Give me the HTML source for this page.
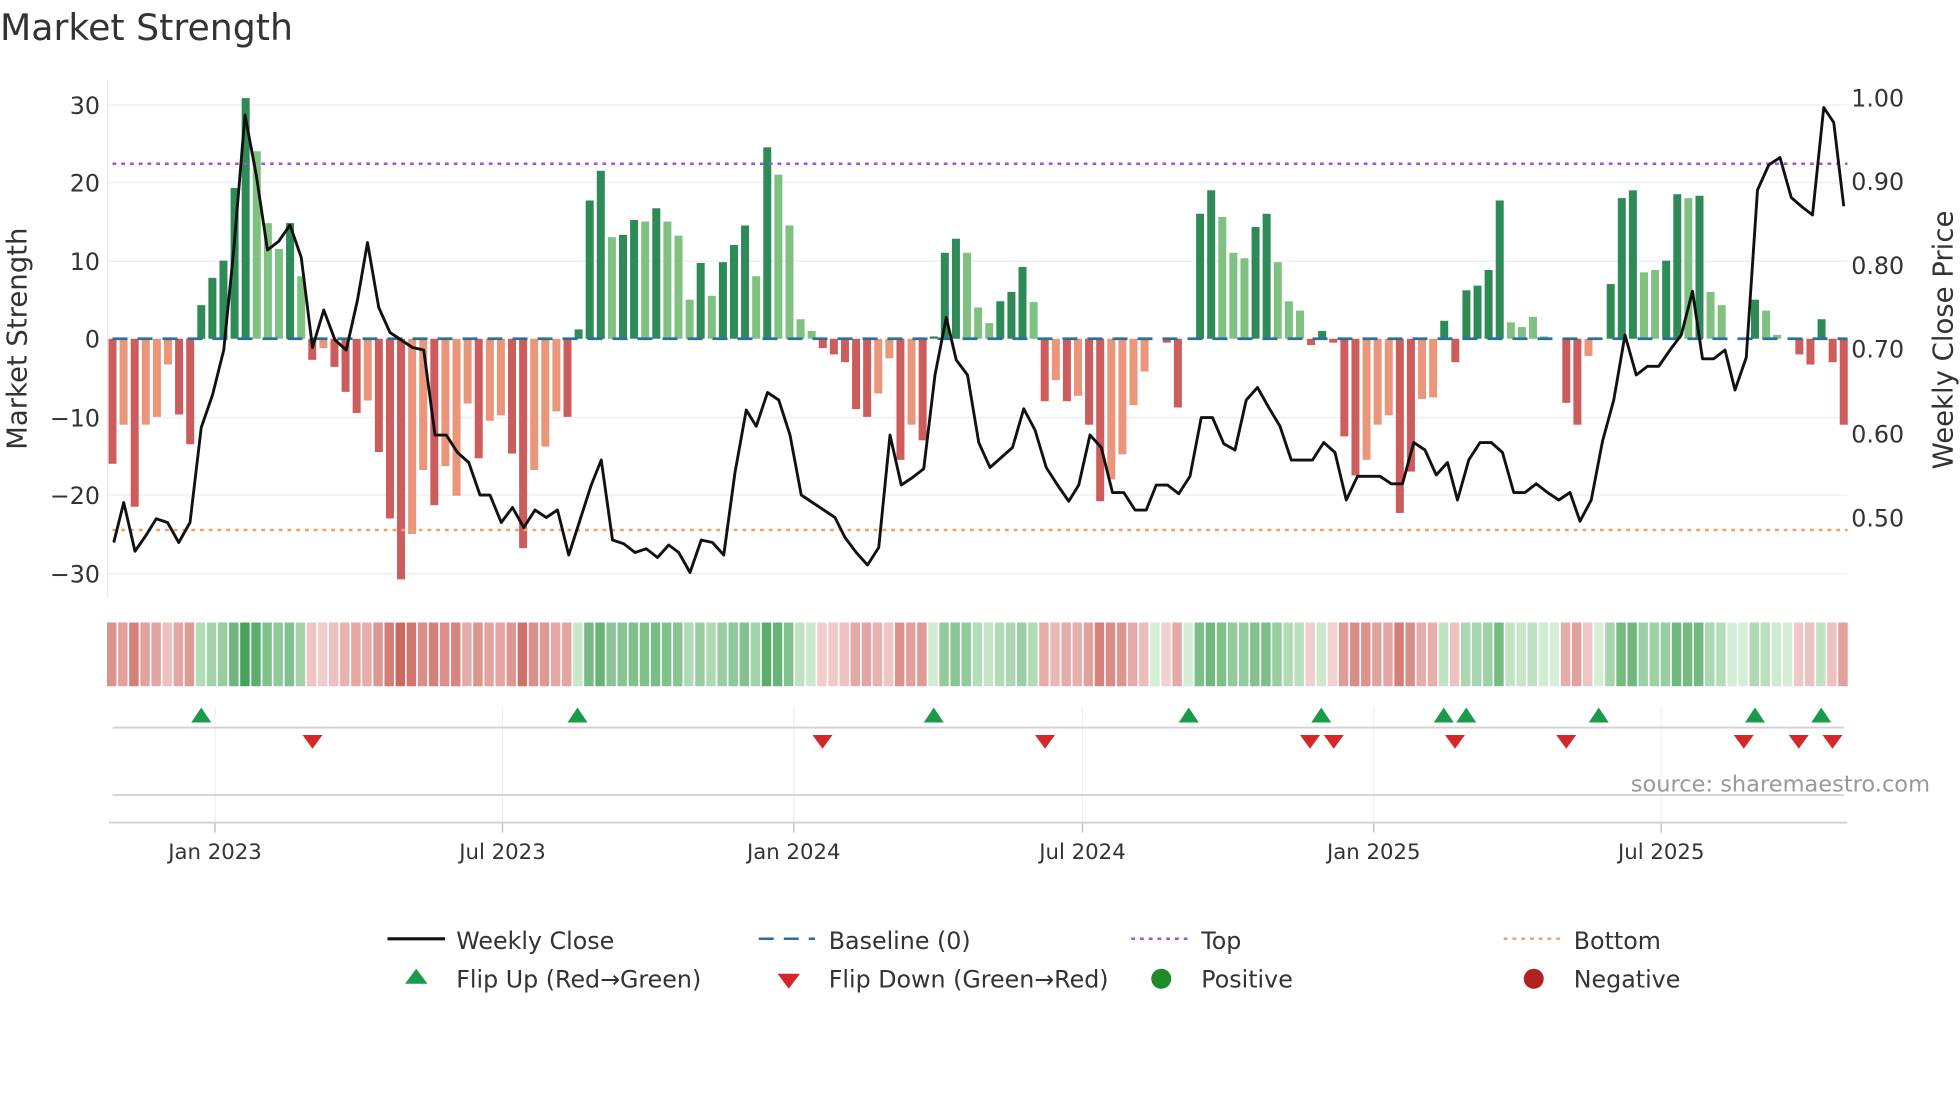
<!DOCTYPE html>
<html><head><meta charset="utf-8"><style>
html,body{margin:0;padding:0;background:#fff;width:1960px;height:1102px;overflow:hidden}
svg{display:block}
text{font-family:"DejaVu Sans","Liberation Sans",sans-serif;fill:#333}
</style></head><body>
<svg id="s" width="1960" height="1102" viewBox="0 0 1568 881.6" xmlns="http://www.w3.org/2000/svg">
<rect width="1568" height="882" fill="#fff"/>
<text x="0" y="32" font-size="29" fill="#333">Market Strength</text>
<g id="grid" stroke="#eef0f3" stroke-width="1.2"></g>
<line x1="86" y1="65" x2="86" y2="478" stroke="#e6e8ea" stroke-width="1"/>
<g id="bars"></g>
<line x1="90" y1="131" x2="1478" y2="131" stroke="#9b59d9" stroke-width="2" stroke-dasharray="3,4"/>
<line x1="90" y1="424" x2="1478" y2="424" stroke="#f0a060" stroke-width="2" stroke-dasharray="3,4"/>
<line x1="90" y1="271" x2="1478" y2="271" stroke="#2a6f9e" stroke-width="2.2" stroke-dasharray="12,8"/>
<polyline id="pl" fill="none" stroke="#111" stroke-width="2.3" stroke-linejoin="round"/>
<g font-size="19" text-anchor="end">
<text x="80" y="91">30</text><text x="80" y="153">20</text><text x="80" y="216">10</text><text x="80" y="278">0</text>
<text x="80" y="341">−10</text><text x="80" y="403">−20</text><text x="80" y="466">−30</text>
</g>
<g font-size="19">
<text x="1481" y="85">1.00</text><text x="1481" y="152">0.90</text><text x="1481" y="219">0.80</text><text x="1481" y="286">0.70</text>
<text x="1481" y="354">0.60</text><text x="1481" y="421">0.50</text>
</g>
<text transform="translate(21,271) rotate(-90)" font-size="22" text-anchor="middle">Market Strength</text>
<text transform="translate(1562,272) rotate(-90)" font-size="22" text-anchor="middle">Weekly Close Price</text>
<g id="heat"></g>
<g id="vgrid" stroke="#eef0f3" stroke-width="1"></g>
<line x1="90" y1="582" x2="1475" y2="582" stroke="#d0d2d4" stroke-width="1.5"/>
<line x1="90" y1="636" x2="1475" y2="636" stroke="#d0d2d4" stroke-width="1.5"/>
<line x1="87" y1="658" x2="1478" y2="658" stroke="#d0d2d4" stroke-width="1.5"/>
<g id="flips"></g>
<text x="1544" y="633" font-size="18" fill="#999" text-anchor="end" style="fill:#999">source: sharemaestro.com</text>
<g font-size="17" text-anchor="middle">
<text x="172" y="687">Jan 2023</text><text x="402" y="687">Jul 2023</text><text x="635" y="687">Jan 2024</text>
<text x="866" y="687">Jul 2024</text><text x="1099" y="687">Jan 2025</text><text x="1329" y="687">Jul 2025</text>
</g>
<g font-size="19">
<line x1="310" y1="751" x2="356" y2="751" stroke="#111" stroke-width="2.5"/>
<text x="365" y="759">Weekly Close</text>
<line x1="607" y1="751" x2="652" y2="751" stroke="#2a6f9e" stroke-width="2" stroke-dasharray="12,8"/>
<text x="663" y="759">Baseline (0)</text>
<line x1="905" y1="751" x2="950" y2="751" stroke="#9b59d9" stroke-width="2" stroke-dasharray="3,4"/>
<text x="961" y="759">Top</text>
<line x1="1203" y1="751" x2="1248" y2="751" stroke="#f0a060" stroke-width="2" stroke-dasharray="3,4"/>
<text x="1259" y="759">Bottom</text>
<polygon points="324,787 342,787 333,775" fill="#1a9a4a"/>
<text x="365" y="790">Flip Up (Red→Green)</text>
<polygon points="622,779 640,779 631,791" fill="#d62728"/>
<text x="663" y="790">Flip Down (Green→Red)</text>
<circle cx="929" cy="783" r="8" fill="#1f8a2a"/>
<text x="961" y="790">Positive</text>
<circle cx="1227" cy="783" r="8" fill="#b22222"/>
<text x="1259" y="790">Negative</text>
</g>
</svg>
<script>
var NS="http://www.w3.org/2000/svg";
function el(t,a,p){var e=document.createElementNS(NS,t);for(var k in a)e.setAttribute(k,a[k]);document.getElementById(p).appendChild(e);return e;}
[84,146,209,334,396,459].forEach(function(y){el("line",{x1:87,x2:1478,y1:y,y2:y},"grid");});
[172,402,635,866,1099,1329].forEach(function(x){el("line",{x1:x,x2:x,y1:565,y2:658},"vgrid");el("line",{x1:x,x2:x,y1:658,y2:666,stroke:"#bbb"},"vgrid");});
var v=[[-16,1],[-11,0],[-21.5,1],[-11,0],[-10,0],[-3.3,0],[-9.7,1],[-13.5,1],[4.3,1],[7.8,1],[10,1],[19.3,1],[30.8,1],[24,0],[14.8,0],[11.5,0],[14.8,1],[8,0],[-2.7,1],[-1.2,0],[-3.6,1],[-6.8,1],[-9.5,1],[-7.9,0],[-14.5,1],[-23,1],[-30.8,1],[-25,0],[-16.8,0],[-21.3,1],[-16.3,0],[-20.1,0],[-8.3,0],[-15.3,1],[-10.5,0],[-9.8,0],[-14.7,1],[-26.8,1],[-16.8,0],[-13.8,0],[-9.3,0],[-10,1],[1.2,1],[17.7,1],[21.5,1],[13,0],[13.3,1],[15.2,1],[15,0],[16.7,1],[15,0],[13.2,0],[5,0],
[9.7,1],[5.5,0],[9.8,1],[12,1],[14.5,1],[8,0],[24.5,1],[21,0],[14.5,0],[2.5,0],[1,0],[-1.2,1],[-2,1],[-3,1],[-9,1],[-10,1],[-7,0],[-2.5,0],[-15.5,1],[-11,0],[-13,1],[0.3,1],[11,1],[12.8,1],[11,0],[4,0],[2,0],[4.8,1],[6,1],[9.2,1],[4.7,0],[-8,1],[-5.3,0],[-8,1],[-7.3,0],[-11,1],[-20.8,1],[-18,0],[-14.8,0],[-8.5,0],[-4.2,0],[0,0],[-0.5,1],[-8.8,1],[0,0],[16,1],[19,1],[15.6,0],[11,0],[10.3,0],[14.3,1],[16,1],[9.8,0],[4.8,0],[3.6,0],[-0.8,1],[1,1],[-0.5,1],[-12.5,1],[-17.5,1],[-15.5,0],[-11,0],[-9.8,0],[-22.3,1],[-17,1],[-7.7,0],[-7.5,0],[2.3,1],[-3,1],[6.2,1],[6.8,1],[8.8,1],[17.7,1],[2.1,0],[1.5,0],[2.8,0],[0.3,0],[0,0],[-8.2,1],[-11,1],[-2.2,0],[0,0],[7,1],[18,1],[19,1],[8.5,0],[8.8,0],[10,1],[18.5,1],[18,0],[18.3,1],[6,0],[4.3,0],[0,0],[0,0],[5,1],[3.6,0],[0.5,0],[0,0],[-2,1],[-3.3,1],[2.5,1],[-3,1],[-11,1]];
var n=v.length, x0=90, dx=(1475-90)/(n-1);
function mix(a,b,t){return "rgb("+a.map(function(c,i){return Math.round(c+(b[i]-c)*t)}).join(",")+")";}
v.forEach(function(b,i){
 var x=x0+dx*i, val=b[0], y=271-val*6.25, h=Math.abs(val*6.25);
 var c=val>=0?(b[1]?"#2e8b57":"#80c080"):(b[1]?"#cd5c5c":"#e9967a");
 if(h>0.3) el("rect",{x:x-3.2,y:Math.min(y,271),width:6.4,height:h,fill:c},"bars");
 var t=Math.min(Math.abs(val)/30,1);
 var hc=val>=0?mix([214,238,214],[70,162,90],Math.pow(t,0.75)):mix([244,214,214],[204,104,96],Math.pow(t,0.75));
 el("rect",{x:x-4.4,y:498,width:dx-1.3,height:51,fill:hc},"heat");
});
var p=[[91,434],[99,402],[108,441],[117,428],[125,415],[134,418],[143,434],[152,418],[161,342],[170,316],[179,280],[187,200],[196,92],[205,140],[214,200],[223,193],[232,180],[241,206],[250,278],[259,248],[268,272],[277,280],[286,240],[294,194],[303,246],[312,266],[321,272],[330,278],[339,280],[348,348],[357,348],[366,362],[375,370],[384,396],[392,396],[401,418],[410,406],[419,422],[428,408],[437,414],[446,408],[455,444],[464,416],[473,388],[481,368],[490,432],[499,435],[508,442],[517,439],[526,446],[535,436],[543,442],[552,458],[561,432],[570,434],[579,444],[588,378],[597,328],[605,341],[614,314],[623,320],[632,348],[641,396],[650,402],[659,408],[668,414],[676,430],[685,442],[694,452],[703,438],[712,348],[721,388],[730,382],[739,375],[748,300],[757,254],[765,288],[774,300],[783,354],[792,374],[801,366],[810,358],[819,327],[828,344],[837,374],[846,388],[855,401],[863,388],[872,348],[881,358],[890,394],[899,394],[908,408],[917,408],[925,388],[934,388],[943,395],[952,381],[961,334],[970,334],[979,355],[988,360],[997,320],[1006,310],[1015,326],[1024,341],[1033,368],[1042,368],[1050,368],[1059,354],[1068,362],[1077,400],[1086,381],[1095,381],[1104,381],[1113,387],[1122,387],[1131,354],[1140,360],[1149,380],[1158,370],[1166,400],[1175,368],[1184,354],[1193,354],[1202,362],[1211,394],[1220,394],[1229,387],[1238,394],[1247,400],[1256,394],[1264,417],[1273,400],[1282,353],[1291,320],[1300,268],[1309,300],[1318,293],[1327,293],[1336,280],[1345,268],[1354,233],[1362,287],[1371,287],[1380,280],[1388,312],[1397,286],[1406,152],[1415,132],[1424,126],[1433,158],[1441,165],[1450,172],[1459,86],[1467,98],[1475,165]];
document.getElementById("pl").setAttribute("points",p.map(function(a){return a.join(",")}).join(" "));
[161,462,747,951,1057,1155,1173,1279,1404,1457].forEach(function(x){el("polygon",{points:(x-8)+",578 "+(x+8)+",578 "+x+",566",fill:"#1a9a4a"},"flips");});
[250,658,836,1048,1067,1164,1253,1395,1439,1466].forEach(function(x){el("polygon",{points:(x-8)+",588 "+(x+8)+",588 "+x+",599",fill:"#d62728"},"flips");});
</script>
</body></html>
